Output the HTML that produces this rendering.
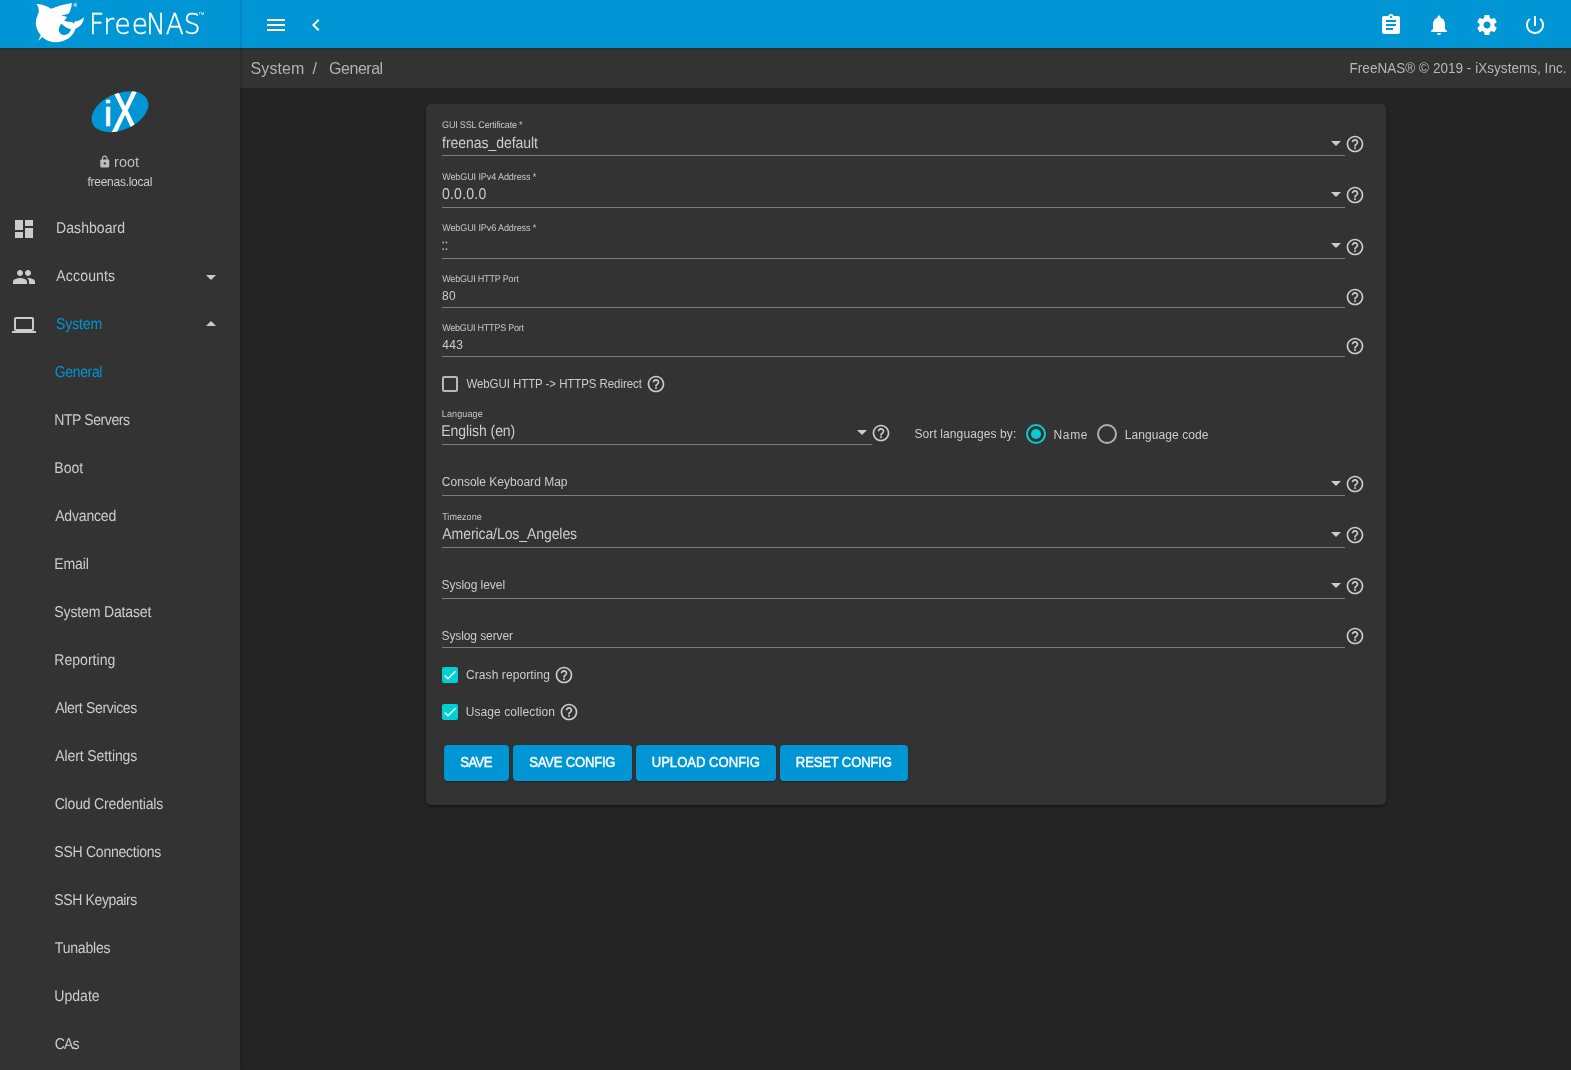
<!DOCTYPE html>
<html lang="en">
<head>
<meta charset="utf-8">
<title>FreeNAS - General</title>
<style>
html,body{margin:0;padding:0;}
body{width:1571px;height:1070px;overflow:hidden;background:#242424;position:relative;font-family:"Liberation Sans",sans-serif;}
.abs{position:absolute;}
.t{position:absolute;white-space:nowrap;display:inline-block;transform-origin:0 0;font-family:"Liberation Sans",sans-serif;}
#top{left:0;top:0;width:1571px;height:48px;background:#0095d5;}
#side{left:0;top:48px;width:240px;height:1022px;background:#333333;box-shadow:1px 0 4px rgba(0,0,0,.22);}
#crumb{left:240px;top:48px;width:1331px;height:40px;background:#333333;}
#card{left:426px;top:104px;width:960px;height:701px;background:#333333;border-radius:5px;box-shadow:0 3px 1px -2px rgba(0,0,0,.2),0 2px 2px 0 rgba(0,0,0,.14),0 1px 5px 0 rgba(0,0,0,.12);}
.ul{position:absolute;height:1px;background:#7d7d7d;left:442px;width:903px;}
.arr{position:absolute;width:0;height:0;border-left:5px solid transparent;border-right:5px solid transparent;border-top:5px solid #cccccc;}
svg{position:absolute;overflow:visible;}
.ic{fill:#ffffff;}
.ig{fill:#cccccc;}
.cb{position:absolute;width:12px;height:12px;border:2px solid #b8b8b8;border-radius:2px;}
.cbc{position:absolute;width:16px;height:16px;border-radius:2px;background:#00d0d6;}
.btn{position:absolute;top:745px;height:36px;background:#0095d5;border-radius:4px;box-shadow:0 1px 2px rgba(0,0,0,.3);}
.logo{position:absolute;white-space:nowrap;color:#fff;font-family:"DejaVu Sans Light","DejaVu Sans",sans-serif;font-weight:200;}
</style>
</head>
<body>
<div id="crumb" class="abs"></div>
<div id="side" class="abs"></div>
<div id="top" class="abs"></div>
<div class="abs" style="left:240px;top:0;width:3px;height:48px;background:linear-gradient(90deg,rgba(0,0,0,.12),rgba(0,0,0,0));"></div>
<div class="abs" style="left:0;top:48px;width:1571px;height:3px;background:linear-gradient(180deg,rgba(0,0,0,.15),rgba(0,0,0,0));"></div>
<div id="card" class="abs"></div>

<!-- FreeNAS logo -->
<svg style="left:0;top:0" width="240" height="48" viewBox="0 0 240 48">
<path fill="#fff" fill-rule="evenodd" d="M36.1 4 C40 3.9 45.5 5.2 51.3 8.8 C57 6.5 65 4 72 3.1 C71.6 7 70.6 10.5 68.7 13.7 C66 14.6 63.5 15.1 61 15.6 C63 16 65 16.4 67 16.9 C66.2 18.2 65.2 19.5 64.1 20.6 C66.5 21.9 69.5 21.9 72.4 22 L73.3 23.6 L75.3 21.3 C78.8 21.2 82 19.6 83.6 17 C84.3 21.5 81.3 26.3 76.2 28.3 C75.4 29 75.2 29.8 74.9 30.5 C72.5 36.2 67 41.3 57 42.2 C51 42.4 46 40.6 42.3 37 L38.1 40.9 L40.8 35.4 C37.6 31 35.6 26.5 35.8 22.4 C36 18.5 37.6 15.3 38.7 12.6 C39 10 38.5 7 37.2 5.2 Z M61.4 23.5 C59.5 26 58.3 29 58.9 31 C59.8 33.8 62 35.1 64.5 35 C67.8 34.9 70 32.6 71.1 29.2 C67.5 28.4 64 26.5 61.4 23.5 Z"/>
<circle cx="75.3" cy="4.9" r="1.9" fill="#fff" fill-opacity=".55"/>
</svg>
<div class="abs" style="left:0;top:0;width:240px;height:48px;will-change:transform;">
<span class="logo" id="fn" style="left:89.4px;top:4.4px;font-size:28.8px;line-height:40px;transform-origin:0 0;transform:scaleX(.917);-webkit-text-stroke:0.45px #fff;"><span style="letter-spacing:1.1px">Fre</span><span style="letter-spacing:-2.3px">e</span>NAS</span>
<span class="logo" id="tm" style="left:198.6px;top:9.8px;font-size:4px;line-height:8px;font-family:'Liberation Sans',sans-serif;font-weight:400;">TM</span>
</div>

<!-- top icons -->
<svg class="ic" style="left:264px;top:13px" width="24" height="24" viewBox="0 0 24 24"><path d="M3 18h18v-2H3v2zm0-5h18v-2H3v2zm0-7v2h18V6H3z"/></svg>
<svg class="ic" style="left:304px;top:13px" width="24" height="24" viewBox="0 0 24 24"><path d="M15.41 7.41L14 6l-6 6 6 6 1.41-1.41L10.83 12z"/></svg>
<svg class="ic" style="left:1379px;top:13px" width="24" height="24" viewBox="0 0 24 24"><path d="M19 3h-4.180C14.400 1.840 13.300 1 12 1c-1.300 0-2.400.840-2.820 2H5c-1.100 0-2 .900-2 2v14c0 1.100.900 2 2 2h14c1.100 0 2-.900 2-2V5c0-1.100-.900-2-2-2zm-7 0c.550 0 1 .450 1 1s-.450 1-1 1-1-.450-1-1 .450-1 1-1zm2 14H7v-2h7v2zm3-4H7v-2h10v2zm0-4H7V7h10v2z"/></svg>
<svg class="ic" style="left:1427px;top:13px" width="24" height="24" viewBox="0 0 24 24"><path d="M12 22c1.100 0 2-.900 2-2h-4c0 1.100.890 2 2 2zm6-6v-5c0-3.070-1.640-5.640-4.500-6.320V4c0-.830-.670-1.500-1.500-1.500s-1.500.670-1.500 1.500v.680C7.630 5.360 6 7.920 6 11v5l-2 2v1h16v-1l-2-2z"/></svg>
<svg class="ic" style="left:1475px;top:13px" width="24" height="24" viewBox="0 0 24 24"><path d="M19.430 12.980c.040-.320.070-.640.070-.980s-.030-.660-.070-.980l2.110-1.650c.190-.150.240-.420.120-.640l-2-3.460c-.120-.220-.390-.300-.610-.220l-2.490 1c-.520-.400-1.080-.730-1.690-.980l-.380-2.650C14.460 2.180 14.250 2 14 2h-4c-.250 0-.460.180-.490.420l-.380 2.650c-.610.250-1.170.590-1.690.980l-2.490-1c-.230-.090-.490 0-.610.220l-2 3.460c-.130.220-.070.490.12.640l2.110 1.650c-.040.320-.070.650-.070.980s.030.660.070.980l-2.110 1.650c-.190.150-.240.420-.120.640l2 3.460c.120.220.390.300.610.220l2.490-1c.520.400 1.080.730 1.690.980l.38 2.650c.030.240.240.420.490.420h4c.250 0 .460-.180.490-.420l.38-2.650c.610-.250 1.170-.590 1.690-.980l2.490 1c.230.090.490 0 .610-.220l2-3.460c.120-.220.070-.490-.12-.640l-2.110-1.650zM12 15.500c-1.930 0-3.500-1.570-3.500-3.500s1.570-3.500 3.500-3.500 3.500 1.570 3.500 3.500-1.570 3.500-3.500 3.500z"/></svg>
<svg class="ic" style="left:1523px;top:13px" width="24" height="24" viewBox="0 0 24 24"><path d="M13 3h-2v10h2V3zm4.830 2.170l-1.420 1.420C17.990 7.860 19 9.810 19 12c0 3.870-3.130 7-7 7s-7-3.130-7-7c0-2.190 1.010-4.140 2.580-5.420L6.170 5.170C4.230 6.820 3 9.260 3 12c0 4.970 4.030 9 9 9s9-4.030 9-9c0-2.740-1.230-5.180-3.170-6.830z"/></svg>

<!-- iX logo -->
<svg style="left:80px;top:80px" width="80" height="64" viewBox="80 80 80 64">
<defs><clipPath id="ixc"><ellipse cx="120" cy="111.7" rx="29.9" ry="18.3" transform="rotate(-23 120 111.7)"/></clipPath></defs>
<ellipse cx="120" cy="111.7" rx="29.9" ry="18.3" transform="rotate(-23 120 111.7)" fill="#0095d5"/>
<g clip-path="url(#ixc)" fill="#fff" font-family="Liberation Sans, sans-serif">
<text x="0" y="0" font-size="64" text-anchor="middle" stroke="#fff" stroke-width="0.5" transform="translate(124.9 133.5) scale(.69 1)">X</text>
<text x="0" y="0" font-size="36" text-anchor="middle" stroke="#fff" stroke-width="0.7" transform="translate(108 126.4) scale(1 .95)">i</text>
</g>
</svg>
<svg class="ig" style="left:97.7px;top:154.8px;fill:#bdbdbd" width="13.5" height="13.5" viewBox="0 0 24 24"><path d="M18 8h-1V6c0-2.760-2.240-5-5-5S7 3.240 7 6v2H6c-1.100 0-2 .900-2 2v10c0 1.100.900 2 2 2h12c1.100 0 2-.900 2-2V10c0-1.100-.900-2-2-2zm-6 9c-1.100 0-2-.900-2-2s.900-2 2-2 2 .900 2 2-.900 2-2 2zm3.100-9H8.900V6c0-1.710 1.390-3.100 3.100-3.100 1.710 0 3.100 1.390 3.100 3.100v2z"/></svg>

<!-- sidebar icons -->
<svg class="ig" style="left:12px;top:217px" width="24" height="24" viewBox="0 0 24 24"><path d="M3 13h8V3H3v10zm0 8h8v-6H3v6zm10 0h8V11h-8v10zm0-18v6h8V3h-8z"/></svg>
<svg class="ig" style="left:12px;top:265px" width="24" height="24" viewBox="0 0 24 24"><path d="M16 11c1.660 0 2.990-1.340 2.990-3S17.660 5 16 5c-1.660 0-3 1.340-3 3s1.340 3 3 3zm-8 0c1.660 0 2.990-1.340 2.990-3S9.660 5 8 5C6.340 5 5 6.340 5 8s1.340 3 3 3zm0 2c-2.330 0-7 1.170-7 3.500V19h14v-2.500c0-2.330-4.670-3.500-7-3.500zm8 0c-.290 0-.620.020-.970.050 1.160.840 1.970 1.970 1.970 3.450V19h6v-2.500c0-2.330-4.670-3.500-7-3.500z"/></svg>
<svg class="ig" style="left:12px;top:313px" width="24" height="24" viewBox="0 0 24 24"><path d="M20 18c1.100 0 2-.900 2-2V6c0-1.100-.900-2-2-2H4c-1.100 0-2 .900-2 2v10c0 1.100.900 2 2 2H0v2h24v-2h-4zM4 6h16v10H4V6z"/></svg>
<svg class="ig" style="left:199px;top:265px" width="24" height="24" viewBox="0 0 24 24"><path d="M7 10l5 5 5-5z"/></svg>
<svg class="ig" style="left:199px;top:312px" width="24" height="24" viewBox="0 0 24 24"><path d="M7 14l5-5 5 5z"/></svg>

<!-- underlines -->
<div class="ul" style="top:155px"></div>
<div class="ul" style="top:207px"></div>
<div class="ul" style="top:258px"></div>
<div class="ul" style="top:307px"></div>
<div class="ul" style="top:356px"></div>
<div class="ul" style="top:444px;width:430px"></div>
<div class="ul" style="top:495px"></div>
<div class="ul" style="top:547px"></div>
<div class="ul" style="top:598px"></div>
<div class="ul" style="top:647px"></div>

<!-- select arrows -->
<div class="arr" style="left:1331px;top:141px"></div>
<div class="arr" style="left:1331px;top:192px"></div>
<div class="arr" style="left:1331px;top:243px"></div>
<div class="arr" style="left:857px;top:429.5px"></div>
<div class="arr" style="left:1331px;top:481px"></div>
<div class="arr" style="left:1331px;top:532px"></div>
<div class="arr" style="left:1331px;top:583px"></div>

<svg class="ig" style="left:1345.25px;top:133.80px" width="20" height="20" viewBox="0 0 24 24"><path d="M11 18h2v-2h-2v2zm1-16C6.480 2 2 6.480 2 12s4.480 10 10 10 10-4.480 10-10S17.520 2 12 2zm0 18c-4.410 0-8-3.590-8-8s3.590-8 8-8 8 3.590 8 8-3.590 8-8 8zm0-14c-2.210 0-4 1.790-4 4h2c0-1.100.900-2 2-2s2 .900 2 2c0 2-3 1.750-3 5h2c0-2.250 3-2.500 3-5 0-2.210-1.790-4-4-4z"/></svg>
<svg class="ig" style="left:1345.25px;top:185.00px" width="20" height="20" viewBox="0 0 24 24"><path d="M11 18h2v-2h-2v2zm1-16C6.480 2 2 6.480 2 12s4.480 10 10 10 10-4.480 10-10S17.520 2 12 2zm0 18c-4.410 0-8-3.590-8-8s3.590-8 8-8 8 3.590 8 8-3.590 8-8 8zm0-14c-2.210 0-4 1.790-4 4h2c0-1.100.900-2 2-2s2 .900 2 2c0 2-3 1.750-3 5h2c0-2.250 3-2.500 3-5 0-2.210-1.790-4-4-4z"/></svg>
<svg class="ig" style="left:1345.25px;top:236.50px" width="20" height="20" viewBox="0 0 24 24"><path d="M11 18h2v-2h-2v2zm1-16C6.480 2 2 6.480 2 12s4.480 10 10 10 10-4.480 10-10S17.520 2 12 2zm0 18c-4.410 0-8-3.590-8-8s3.590-8 8-8 8 3.590 8 8-3.590 8-8 8zm0-14c-2.210 0-4 1.790-4 4h2c0-1.100.900-2 2-2s2 .900 2 2c0 2-3 1.750-3 5h2c0-2.250 3-2.500 3-5 0-2.210-1.790-4-4-4z"/></svg>
<svg class="ig" style="left:1345.25px;top:286.50px" width="20" height="20" viewBox="0 0 24 24"><path d="M11 18h2v-2h-2v2zm1-16C6.480 2 2 6.480 2 12s4.480 10 10 10 10-4.480 10-10S17.520 2 12 2zm0 18c-4.410 0-8-3.590-8-8s3.590-8 8-8 8 3.590 8 8-3.590 8-8 8zm0-14c-2.210 0-4 1.790-4 4h2c0-1.100.900-2 2-2s2 .900 2 2c0 2-3 1.750-3 5h2c0-2.250 3-2.500 3-5 0-2.210-1.790-4-4-4z"/></svg>
<svg class="ig" style="left:1345.25px;top:335.50px" width="20" height="20" viewBox="0 0 24 24"><path d="M11 18h2v-2h-2v2zm1-16C6.480 2 2 6.480 2 12s4.480 10 10 10 10-4.480 10-10S17.520 2 12 2zm0 18c-4.410 0-8-3.590-8-8s3.590-8 8-8 8 3.590 8 8-3.590 8-8 8zm0-14c-2.210 0-4 1.790-4 4h2c0-1.100.900-2 2-2s2 .900 2 2c0 2-3 1.750-3 5h2c0-2.250 3-2.500 3-5 0-2.210-1.790-4-4-4z"/></svg>
<svg class="ig" style="left:871.10px;top:423.20px" width="20" height="20" viewBox="0 0 24 24"><path d="M11 18h2v-2h-2v2zm1-16C6.480 2 2 6.480 2 12s4.480 10 10 10 10-4.480 10-10S17.520 2 12 2zm0 18c-4.410 0-8-3.590-8-8s3.590-8 8-8 8 3.590 8 8-3.590 8-8 8zm0-14c-2.210 0-4 1.790-4 4h2c0-1.100.900-2 2-2s2 .900 2 2c0 2-3 1.750-3 5h2c0-2.250 3-2.500 3-5 0-2.210-1.790-4-4-4z"/></svg>
<svg class="ig" style="left:1345.25px;top:474.00px" width="20" height="20" viewBox="0 0 24 24"><path d="M11 18h2v-2h-2v2zm1-16C6.480 2 2 6.480 2 12s4.480 10 10 10 10-4.480 10-10S17.520 2 12 2zm0 18c-4.410 0-8-3.590-8-8s3.590-8 8-8 8 3.590 8 8-3.590 8-8 8zm0-14c-2.210 0-4 1.790-4 4h2c0-1.100.900-2 2-2s2 .900 2 2c0 2-3 1.750-3 5h2c0-2.250 3-2.500 3-5 0-2.210-1.790-4-4-4z"/></svg>
<svg class="ig" style="left:1345.25px;top:524.70px" width="20" height="20" viewBox="0 0 24 24"><path d="M11 18h2v-2h-2v2zm1-16C6.480 2 2 6.480 2 12s4.480 10 10 10 10-4.480 10-10S17.520 2 12 2zm0 18c-4.410 0-8-3.590-8-8s3.590-8 8-8 8 3.590 8 8-3.590 8-8 8zm0-14c-2.210 0-4 1.790-4 4h2c0-1.100.900-2 2-2s2 .900 2 2c0 2-3 1.750-3 5h2c0-2.250 3-2.500 3-5 0-2.210-1.790-4-4-4z"/></svg>
<svg class="ig" style="left:1345.25px;top:576.10px" width="20" height="20" viewBox="0 0 24 24"><path d="M11 18h2v-2h-2v2zm1-16C6.480 2 2 6.480 2 12s4.480 10 10 10 10-4.480 10-10S17.520 2 12 2zm0 18c-4.410 0-8-3.590-8-8s3.590-8 8-8 8 3.590 8 8-3.590 8-8 8zm0-14c-2.210 0-4 1.790-4 4h2c0-1.100.900-2 2-2s2 .900 2 2c0 2-3 1.750-3 5h2c0-2.250 3-2.500 3-5 0-2.210-1.790-4-4-4z"/></svg>
<svg class="ig" style="left:1345.25px;top:626.10px" width="20" height="20" viewBox="0 0 24 24"><path d="M11 18h2v-2h-2v2zm1-16C6.480 2 2 6.480 2 12s4.480 10 10 10 10-4.480 10-10S17.520 2 12 2zm0 18c-4.410 0-8-3.590-8-8s3.590-8 8-8 8 3.590 8 8-3.590 8-8 8zm0-14c-2.210 0-4 1.790-4 4h2c0-1.100.900-2 2-2s2 .900 2 2c0 2-3 1.750-3 5h2c0-2.250 3-2.500 3-5 0-2.210-1.790-4-4-4z"/></svg>
<svg class="ig" style="left:646.30px;top:373.80px" width="20" height="20" viewBox="0 0 24 24"><path d="M11 18h2v-2h-2v2zm1-16C6.480 2 2 6.480 2 12s4.480 10 10 10 10-4.480 10-10S17.520 2 12 2zm0 18c-4.410 0-8-3.590-8-8s3.590-8 8-8 8 3.590 8 8-3.590 8-8 8zm0-14c-2.210 0-4 1.790-4 4h2c0-1.100.900-2 2-2s2 .900 2 2c0 2-3 1.750-3 5h2c0-2.250 3-2.500 3-5 0-2.210-1.790-4-4-4z"/></svg>
<svg class="ig" style="left:554.00px;top:664.70px" width="20" height="20" viewBox="0 0 24 24"><path d="M11 18h2v-2h-2v2zm1-16C6.480 2 2 6.480 2 12s4.480 10 10 10 10-4.480 10-10S17.520 2 12 2zm0 18c-4.410 0-8-3.590-8-8s3.590-8 8-8 8 3.590 8 8-3.590 8-8 8zm0-14c-2.210 0-4 1.790-4 4h2c0-1.100.900-2 2-2s2 .900 2 2c0 2-3 1.750-3 5h2c0-2.250 3-2.500 3-5 0-2.210-1.790-4-4-4z"/></svg>
<svg class="ig" style="left:559.00px;top:701.60px" width="20" height="20" viewBox="0 0 24 24"><path d="M11 18h2v-2h-2v2zm1-16C6.480 2 2 6.480 2 12s4.480 10 10 10 10-4.480 10-10S17.520 2 12 2zm0 18c-4.410 0-8-3.590-8-8s3.590-8 8-8 8 3.590 8 8-3.590 8-8 8zm0-14c-2.210 0-4 1.790-4 4h2c0-1.100.900-2 2-2s2 .900 2 2c0 2-3 1.750-3 5h2c0-2.250 3-2.500 3-5 0-2.210-1.790-4-4-4z"/></svg>

<!-- checkboxes -->
<div class="cb" style="left:442px;top:376px"></div>
<div class="cbc" style="left:442px;top:667px"></div>
<svg style="left:442px;top:667px" width="16" height="16" viewBox="0 0 24 24"><path d="M4.1 12.7 9 17.6 20.3 6.3" fill="none" stroke="#fff" stroke-width="2.2"/></svg>
<div class="cbc" style="left:442px;top:704px"></div>
<svg style="left:442px;top:704px" width="16" height="16" viewBox="0 0 24 24"><path d="M4.1 12.7 9 17.6 20.3 6.3" fill="none" stroke="#fff" stroke-width="2.2"/></svg>

<!-- radios -->
<div class="abs" style="left:1026px;top:424px;width:16px;height:16px;border:2px solid #00d0d6;border-radius:50%"></div>
<div class="abs" style="left:1031px;top:429px;width:10px;height:10px;background:#00d0d6;border-radius:50%"></div>
<div class="abs" style="left:1097px;top:424px;width:16px;height:16px;border:2px solid #b0b0b0;border-radius:50%"></div>

<!-- buttons -->
<div class="btn" style="left:444px;width:65px"></div>
<div class="btn" style="left:513px;width:119px"></div>
<div class="btn" style="left:636px;width:140px"></div>
<div class="btn" style="left:780px;width:128px"></div>

<div id="txt" style="position:absolute;left:0;top:0;width:1571px;height:1070px;will-change:transform;">
<span class="t" id="t0" style="left:114.08px;top:151px;font-size:14.5px;line-height:22px;color:#bdbdbd;letter-spacing:-0.028px;">root</span>
<span class="t" id="t1" style="left:87.43px;top:173px;font-size:12px;line-height:18px;color:#cccccc;letter-spacing:-0.259px;">freenas.local</span>
<span class="t" id="t2" style="left:56px;top:216px;font-size:15.6px;line-height:23px;color:#cccccc;letter-spacing:0.036px;transform:translateX(0.11px) rotate(0.03deg) scale(0.9,1);">Dashboard</span>
<span class="t" id="t3" style="left:56px;top:264px;font-size:15.6px;line-height:23px;color:#cccccc;letter-spacing:0.155px;transform:translateX(0.38px) rotate(0.03deg) scale(0.9,1);">Accounts</span>
<span class="t" id="t4" style="left:56px;top:312px;font-size:15.6px;line-height:23px;color:#0095d5;letter-spacing:-0.150px;transform:translateX(0.04px) rotate(0.03deg) scale(0.9,1);">System</span>
<span class="t" id="t5" style="left:54px;top:360px;font-size:15.6px;line-height:23px;color:#0095d5;letter-spacing:-0.392px;transform:translateX(0.67px) rotate(0.03deg) scale(0.9,1);">General</span>
<span class="t" id="t6" style="left:54px;top:408px;font-size:15.6px;line-height:23px;color:#cccccc;letter-spacing:-0.471px;transform:translateX(0.25px) rotate(0.03deg) scale(0.9,1);">NTP Servers</span>
<span class="t" id="t7" style="left:54px;top:456px;font-size:15.6px;line-height:23px;color:#cccccc;letter-spacing:0.033px;transform:translateX(0.26px) rotate(0.03deg) scale(0.9,1);">Boot</span>
<span class="t" id="t8" style="left:55px;top:504px;font-size:15.6px;line-height:23px;color:#cccccc;letter-spacing:-0.213px;transform:translateX(0.17px) rotate(0.03deg) scale(0.9,1);">Advanced</span>
<span class="t" id="t9" style="left:54px;top:552px;font-size:15.6px;line-height:23px;color:#cccccc;letter-spacing:-0.106px;transform:translateX(0.27px) rotate(0.03deg) scale(0.9,1);">Email</span>
<span class="t" id="t10" style="left:54px;top:600px;font-size:15.6px;line-height:23px;color:#cccccc;letter-spacing:-0.167px;transform:translateX(0.32px) rotate(0.03deg) scale(0.9,1);">System Dataset</span>
<span class="t" id="t11" style="left:54px;top:648px;font-size:15.6px;line-height:23px;color:#cccccc;letter-spacing:0.020px;transform:translateX(0.27px) rotate(0.03deg) scale(0.9,1);">Reporting</span>
<span class="t" id="t12" style="left:55px;top:696px;font-size:15.6px;line-height:23px;color:#cccccc;letter-spacing:-0.383px;transform:translateX(0.23px) rotate(0.03deg) scale(0.9,1);">Alert Services</span>
<span class="t" id="t13" style="left:55px;top:744px;font-size:15.6px;line-height:23px;color:#cccccc;letter-spacing:-0.111px;transform:translateX(0.17px) rotate(0.03deg) scale(0.9,1);">Alert Settings</span>
<span class="t" id="t14" style="left:54px;top:792px;font-size:15.6px;line-height:23px;color:#cccccc;letter-spacing:-0.209px;transform:translateX(0.67px) rotate(0.03deg) scale(0.9,1);">Cloud Credentials</span>
<span class="t" id="t15" style="left:54px;top:840px;font-size:15.6px;line-height:23px;color:#cccccc;letter-spacing:-0.299px;transform:translateX(0.32px) rotate(0.03deg) scale(0.9,1);">SSH Connections</span>
<span class="t" id="t16" style="left:54px;top:888px;font-size:15.6px;line-height:23px;color:#cccccc;letter-spacing:-0.434px;transform:translateX(0.32px) rotate(0.03deg) scale(0.9,1);">SSH Keypairs</span>
<span class="t" id="t17" style="left:54px;top:936px;font-size:15.6px;line-height:23px;color:#cccccc;letter-spacing:-0.225px;transform:translateX(0.82px) rotate(0.03deg) scale(0.9,1);">Tunables</span>
<span class="t" id="t18" style="left:54px;top:984px;font-size:15.6px;line-height:23px;color:#cccccc;letter-spacing:0.018px;transform:translateX(0.32px) rotate(0.03deg) scale(0.9,1);">Update</span>
<span class="t" id="t19" style="left:54px;top:1032px;font-size:15.6px;line-height:23px;color:#cccccc;letter-spacing:-0.879px;transform:translateX(0.66px) rotate(0.03deg) scale(0.9,1);">CAs</span>
<span class="t" id="t20" style="left:250px;top:56px;font-size:16.4px;line-height:25px;color:#b2b2b2;letter-spacing:0.104px;transform:translateX(0.54px) scale(0.975,1);">System</span>
<span class="t" id="t21" style="left:312.47px;top:56px;font-size:16.4px;line-height:25px;color:#b2b2b2;letter-spacing:0.000px;">/</span>
<span class="t" id="t22" style="left:329px;top:56px;font-size:16.4px;line-height:25px;color:#b2b2b2;letter-spacing:-0.483px;transform:translateX(0.11px) scale(0.975,1);">General</span>
<span class="t" id="t23" style="left:1349px;top:57px;font-size:15px;line-height:22px;color:#b8b8b8;letter-spacing:0.043px;transform:translateX(0.55px) scale(0.9,1);">FreeNAS® © 2019 - iXsystems, Inc.</span>
<span class="t" id="t24" style="left:442px;top:117px;font-size:9.7px;line-height:15px;color:#c6c6c6;letter-spacing:-0.203px;transform:translateX(0.11px) rotate(0.03deg) scale(0.93,1);">GUI SSL Certificate *</span>
<span class="t" id="t25" style="left:442px;top:169px;font-size:9.7px;line-height:15px;color:#c6c6c6;letter-spacing:-0.096px;transform:translateX(0.16px) rotate(0.03deg) scale(0.93,1);">WebGUI IPv4 Address *</span>
<span class="t" id="t26" style="left:442px;top:220px;font-size:9.7px;line-height:15px;color:#c6c6c6;letter-spacing:-0.096px;transform:translateX(0.16px) rotate(0.03deg) scale(0.93,1);">WebGUI IPv6 Address *</span>
<span class="t" id="t27" style="left:442px;top:271px;font-size:9.7px;line-height:15px;color:#c6c6c6;letter-spacing:-0.195px;transform:translateX(0.17px) rotate(0.03deg) scale(0.93,1);">WebGUI HTTP Port</span>
<span class="t" id="t28" style="left:442px;top:320px;font-size:9.7px;line-height:15px;color:#c6c6c6;letter-spacing:-0.234px;transform:translateX(0.17px) rotate(0.03deg) scale(0.93,1);">WebGUI HTTPS Port</span>
<span class="t" id="t29" style="left:441px;top:406px;font-size:9.7px;line-height:15px;color:#c6c6c6;letter-spacing:0.133px;transform:translateX(0.80px) rotate(0.03deg) scale(0.93,1);">Language</span>
<span class="t" id="t30" style="left:442px;top:509px;font-size:9.7px;line-height:15px;color:#c6c6c6;letter-spacing:0.054px;transform:translateX(0.16px) rotate(0.03deg) scale(0.93,1);">Timezone</span>
<span class="t" id="t31" style="left:442px;top:131px;font-size:15.6px;line-height:23px;color:#cccccc;letter-spacing:-0.066px;transform:translateX(0.11px) rotate(0.03deg) scale(0.9,1);">freenas_default</span>
<span class="t" id="t32" style="left:441px;top:182px;font-size:15.6px;line-height:23px;color:#cccccc;letter-spacing:0.245px;transform:translateX(0.98px) rotate(0.03deg) scale(0.9,1);">0.0.0.0</span>
<span class="t" id="t33" style="left:441px;top:233px;font-size:15.6px;line-height:23px;color:#cccccc;letter-spacing:-0.694px;transform:translateX(0.33px) rotate(0.03deg) scale(0.9,1);">::</span>
<span class="t" id="t34" style="left:442.05px;top:287px;font-size:12px;line-height:18px;color:#cccccc;letter-spacing:0.202px;">80</span>
<span class="t" id="t35" style="left:442.15px;top:336px;font-size:12px;line-height:18px;color:#cccccc;letter-spacing:0.369px;">443</span>
<span class="t" id="t36" style="left:441px;top:419px;font-size:15.6px;line-height:23px;color:#cccccc;letter-spacing:-0.091px;transform:translateX(0.29px) rotate(0.03deg) scale(0.9,1);">English (en)</span>
<span class="t" id="t37" style="left:442px;top:522px;font-size:15.6px;line-height:23px;color:#cccccc;letter-spacing:-0.108px;transform:translateX(0.34px) rotate(0.03deg) scale(0.9,1);">America/Los_Angeles</span>
<span class="t" id="t38" style="left:441.85px;top:473px;font-size:12px;line-height:18px;color:#cccccc;letter-spacing:0.015px;">Console Keyboard Map</span>
<span class="t" id="t39" style="left:441.48px;top:576px;font-size:12px;line-height:18px;color:#cccccc;letter-spacing:-0.032px;">Syslog level</span>
<span class="t" id="t40" style="left:441.48px;top:627px;font-size:12px;line-height:18px;color:#cccccc;letter-spacing:-0.092px;">Syslog server</span>
<span class="t" id="t41" style="left:466px;top:375px;font-size:12.2px;line-height:18px;color:#cccccc;letter-spacing:-0.055px;transform:translateX(0.43px) scale(0.94,1);">WebGUI HTTP -&gt; HTTPS Redirect</span>
<span class="t" id="t42" style="left:465.99px;top:666px;font-size:12px;line-height:18px;color:#cccccc;letter-spacing:0.086px;">Crash reporting</span>
<span class="t" id="t43" style="left:465.70px;top:703px;font-size:12px;line-height:18px;color:#cccccc;letter-spacing:0.083px;">Usage collection</span>
<span class="t" id="t44" style="left:914.45px;top:425px;font-size:12px;line-height:18px;color:#cccccc;letter-spacing:0.103px;">Sort languages by:</span>
<span class="t" id="t45" style="left:1053.54px;top:426px;font-size:12px;line-height:18px;color:#cccccc;letter-spacing:0.631px;">Name</span>
<span class="t" id="t46" style="left:1124.77px;top:426px;font-size:12px;line-height:18px;color:#cccccc;letter-spacing:0.078px;">Language code</span>
<span class="t" id="t47" style="left:460px;top:751px;font-size:14.7px;line-height:22px;color:#fff;letter-spacing:-0.615px;-webkit-text-stroke:0.45px #fff;transform:translateX(0.25px) scale(0.89,1);">SAVE</span>
<span class="t" id="t48" style="left:529px;top:751px;font-size:14.7px;line-height:22px;color:#fff;letter-spacing:-0.237px;-webkit-text-stroke:0.45px #fff;transform:translateX(0.24px) scale(0.89,1);">SAVE CONFIG</span>
<span class="t" id="t49" style="left:651px;top:751px;font-size:14.7px;line-height:22px;color:#fff;letter-spacing:-0.001px;-webkit-text-stroke:0.45px #fff;transform:translateX(0.71px) scale(0.89,1);">UPLOAD CONFIG</span>
<span class="t" id="t50" style="left:795px;top:751px;font-size:14.7px;line-height:22px;color:#fff;letter-spacing:-0.183px;-webkit-text-stroke:0.45px #fff;transform:translateX(0.87px) scale(0.89,1);">RESET CONFIG</span>
</div>
</body>
</html>
